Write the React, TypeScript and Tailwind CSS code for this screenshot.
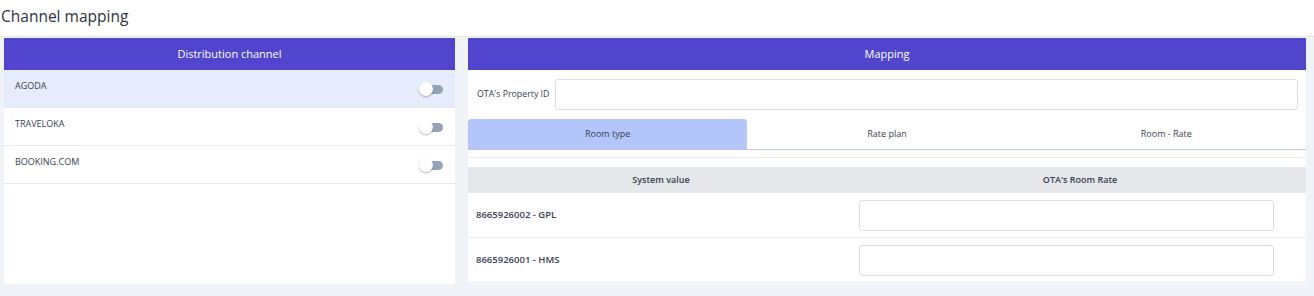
import React from "react";

const channels = [
  { name: "AGODA", active: true },
  { name: "TRAVELOKA", active: false },
  { name: "BOOKING.COM", active: false },
];

const rooms = ["8665926002 - GPL", "8665926001 - HMS"];

function Toggle() {
  return (
    <div className="relative w-[24px] h-[14px]">
      <div className="absolute left-[4px] right-0 top-[3px] h-[9px] rounded-full bg-[#94a3b8]" />
      <div className="absolute left-0 top-0 w-[14px] h-[14px] rounded-full bg-white shadow-[0_1px_2px_rgba(0,0,0,0.3)]" />
    </div>
  );
}

export default function App() {
  return (
    <div className="w-[1314px] h-[296px] bg-[#f0f3f8] font-['Open_Sans',sans-serif] text-[#374151] overflow-hidden">
      {/* Titulo */}
      <div className="h-[37px] bg-white border-b border-[#e5e7eb] flex items-center px-[1px]">
        <h1 className="text-[15.5px] font-medium text-[#2d3340] -mt-[2px]">Channel mapping</h1>
      </div>

      <div className="flex gap-[13px] pl-[4px] pt-[1px]">
        {/* Canales */}
        <div className="w-[451px] h-[246px] bg-white rounded-b-[3px] flex flex-col">
          <div className="h-[32px] bg-[#5145cd] text-white text-[11px] flex items-center justify-center">
            Distribution channel
          </div>
          {channels.map((c) => (
            <div
              key={c.name}
              className={`h-[38px] flex items-center justify-between pl-[11px] pr-[12px] border-b border-[#e2e8f0] ${c.active ? "bg-[#e6ecfb]" : "bg-white"}`}
            >
              <span className="text-[9px] -mt-[5px]">{c.name}</span>
              <Toggle />
            </div>
          ))}
        </div>

        {/* Mapeo */}
        <div className="w-[838px] h-[246px] bg-white flex flex-col">
          <div className="h-[32px] bg-[#5145cd] text-white text-[11px] flex items-center justify-center">
            Mapping
          </div>
          <div className="h-[49px] flex items-center pl-[9px] pr-[8px] gap-[6px]">
            <span className="text-[8.8px] whitespace-nowrap">OTA's Property ID</span>
            <div className="flex-1 h-[31px] border border-[#d8dee8] rounded-[3px]" />
          </div>
          {/* Pestañas */}
          <div className="grid grid-cols-3 h-[31px] border-b border-[#b9c3ee] text-[9px]">
            <div className="bg-[#b3c5fa] rounded-t-[3px] flex items-center justify-center">Room type</div>
            <div className="flex items-center justify-center">Rate plan</div>
            <div className="flex items-center justify-center">Room - Rate</div>
          </div>
          <div className="h-[8px] border-b border-[#e5e9f0]" />
          <div className="h-[9px]" />
          {/* Tabla */}
          <div className="grid grid-cols-[386px_1fr] h-[26px] bg-[#e5e7eb] text-[9px] font-semibold">
            <div className="flex items-center justify-center">System value</div>
            <div className="flex items-center justify-center">OTA's Room Rate</div>
          </div>
          {rooms.map((r) => (
            <div key={r} className="grid grid-cols-[386px_1fr] h-[45px] border-b border-[#e5e9f0] items-center">
              <div className="pl-[8px] text-[9.5px] font-semibold">{r}</div>
              <div className="pl-[5px]">
                <div className="w-[415px] h-[31px] border border-[#d8dee8] rounded-[3px]" />
              </div>
            </div>
          ))}
        </div>
      </div>
    </div>
  );
}
